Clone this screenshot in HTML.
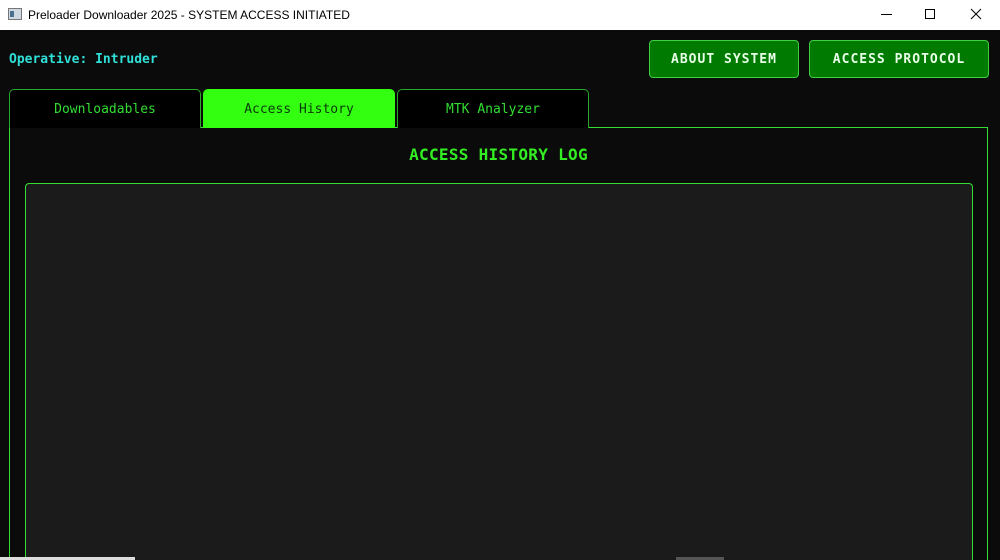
<!DOCTYPE html>
<html style="overflow:hidden;width:1000px;height:560px"><head><style>
*{margin:0;padding:0;box-sizing:border-box}
body{width:1000px;height:560px;overflow:hidden;background:#0b0b0b;font-family:"DejaVu Sans Mono","Liberation Mono",monospace;position:relative}
.tb{position:absolute;left:0;top:0;width:1000px;height:30px;background:#fff;font-family:"Liberation Sans",sans-serif;font-size:12px;color:#000}
.tb .t{position:absolute;left:28px;top:8px}
.ico{position:absolute;left:8px;top:8px;width:14px;height:12px;border:1px solid #777;background:#cfd8e0}
.ico:after{content:"";position:absolute;left:1px;top:2px;width:4px;height:6px;background:#4a7090}
.abs{position:absolute}
.op{left:9px;top:52px;color:#2fe0d8;font-weight:bold;font-size:13px}
.btn{top:40px;height:38px;background:#007a00;border:1px solid #3fd03f;border-radius:4px;color:#e8ffe8;font-weight:bold;font-size:13px;letter-spacing:1px;text-align:center;line-height:38px}
.tab{top:89px;height:39px;border:1px solid #2aa82a;border-bottom:none;border-radius:5px 5px 0 0;background:#000;color:#33dd33;font-size:13px;text-align:center;line-height:39px}
.tab.on{background:#33ff11;color:#0a3a0a;border-color:#33ff11}
</style></head><body>
<div class="tb"><div class="ico"></div><div class="t">Preloader Downloader 2025 - SYSTEM ACCESS INITIATED</div>
<svg class="abs" style="left:870px;top:0" width="130" height="30"><path d="M11 14.5h11" stroke="#000"/><rect x="55.5" y="9.5" width="9" height="9" fill="none" stroke="#000"/><path d="M101 9l10 10M111 9l-10 10" stroke="#000"/></svg></div>
<div class="abs op">Operative: Intruder</div>
<div class="abs btn" style="left:649px;width:150px">ABOUT SYSTEM</div>
<div class="abs btn" style="left:809px;width:180px">ACCESS PROTOCOL</div>
<div class="abs" style="left:9px;top:127px;width:979px;height:433px;border:1px solid #33dd33;border-bottom:none"></div>
<div class="abs tab" style="left:9px;width:192px">Downloadables</div>
<div class="abs tab on" style="left:203px;width:192px">Access History</div>
<div class="abs tab" style="left:397px;width:192px">MTK Analyzer</div>
<div class="abs" style="left:10px;top:145px;width:977px;text-align:center;color:#33ee22;font-weight:bold;font-size:16px;letter-spacing:0.3px">ACCESS HISTORY LOG</div>
<div class="abs" style="left:25px;top:183px;width:948px;height:377px;background:#1b1b1b;border:1px solid #33dd33;border-bottom:none;border-radius:4px 4px 0 0"></div>
<div class="abs" style="left:0;top:557px;width:135px;height:3px;background:#ddd"></div>
<div class="abs" style="left:676px;top:557px;width:48px;height:3px;background:#555"></div>
</body></html>
